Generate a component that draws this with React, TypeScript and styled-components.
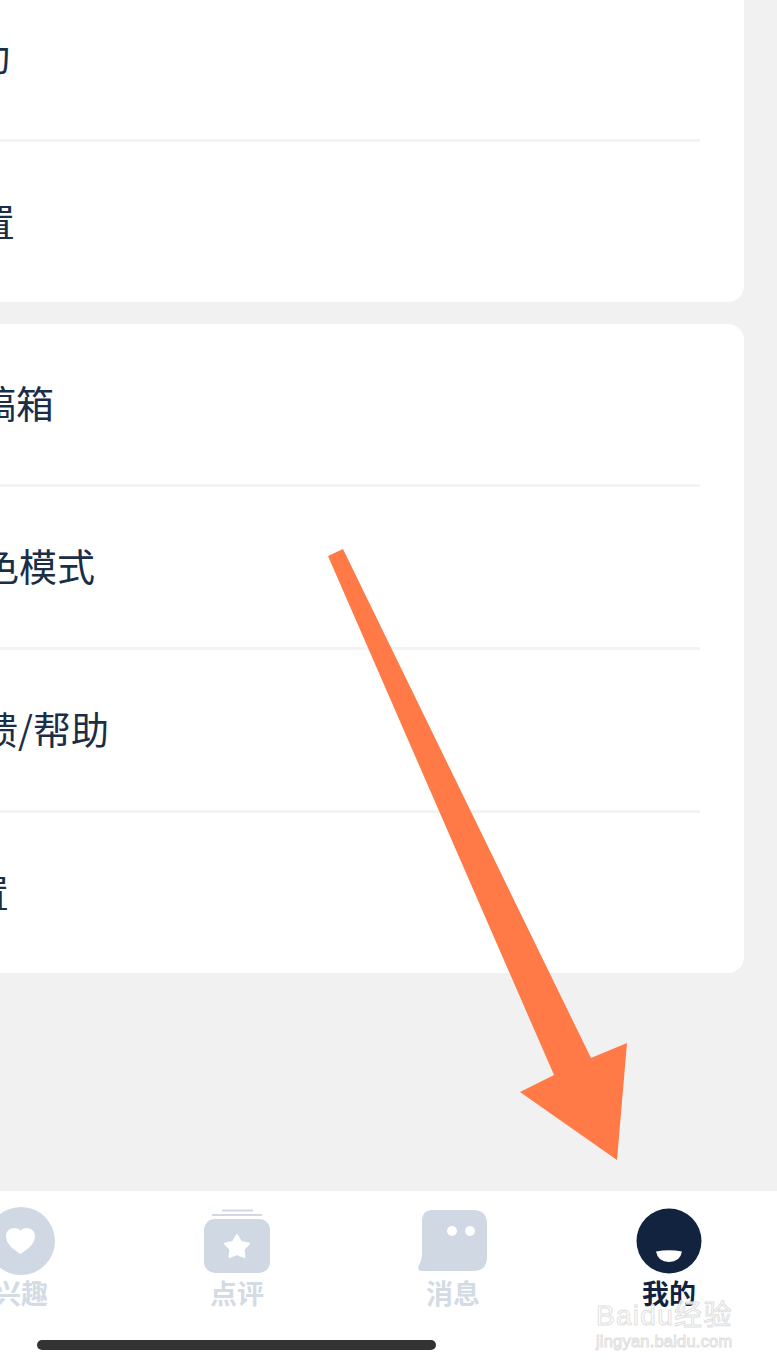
import React from "react";
import styled, { createGlobalStyle } from "styled-components";

const GlobalStyle = createGlobalStyle`
  html, body {
    margin: 0;
    padding: 0;
    width: 777px;
    height: 1367px;
    overflow: hidden;
    background: #f1f1f1;
  }
`;

// the capture is a crop of a 1080px wide phone screen
const Screen = styled.div`
  position: relative;
  display: flex;
  flex-direction: column;
  width: 1080px;
  height: 1367px;
  margin-left: -303px;
  background: #f1f1f1;
  font-family: "Noto Sans CJK SC", "Noto Sans", sans-serif;
`;

const Content = styled.main`
  flex: 1;
  display: flex;
  flex-direction: column;
  gap: 22px;
  margin-top: -21px;
  padding: 0 33px;
`;

const Card = styled.section`
  background: #fff;
  border-radius: 16px;
`;

const Row = styled.div<{ $indent: number; $lift?: number }>`
  display: flex;
  align-items: center;
  box-sizing: content-box;
  height: ${(props) => 160 - (props.$lift ?? 6)}px;
  margin-right: 44px;
  padding-left: ${(props) => props.$indent}px;
  padding-bottom: ${(props) => props.$lift ?? 6}px;
  border-bottom: 3px solid #f3f3f3;
  color: #1a2e48;
  font-size: 38px;
  white-space: nowrap;

  &:last-child {
    border-bottom: none;
  }
`;

const TabBar = styled.nav`
  display: flex;
  flex-direction: column;
  align-items: center;
  height: 177px;
  box-sizing: border-box;
  background: #fff;
  border-top: 1px solid #efefef;
`;

const TabRow = styled.div`
  display: flex;
  width: 100%;
  padding-top: 15px;
`;

const Tab = styled.div<{ $active?: boolean }>`
  flex: 1;
  display: flex;
  flex-direction: column;
  align-items: center;
  color: ${(props) => (props.$active ? "#11233f" : "#d3dbe5")};
  font-size: 27px;
  font-weight: 700;
  line-height: 34px;

  svg {
    display: block;
    width: 72px;
    height: 70px;
  }
`;

const HomeBar = styled.div`
  width: 399px;
  height: 10px;
  margin-top: 30px;
  margin-right: 1px;
  border-radius: 5px;
  background: #333;
`;

const Arrow = styled.svg`
  position: absolute;
  left: 303px;
  top: 0;
  width: 777px;
  height: 1367px;
  pointer-events: none;
`;

const Watermark = styled.div`
  position: absolute;
  left: 899px;
  top: 1299px;
  width: 140px;
  color: rgba(255, 255, 255, 0.75);
  -webkit-text-stroke: 1px #dfdfdf;
  font-family: "Liberation Sans", "Noto Sans CJK SC", sans-serif;
  white-space: nowrap;
`;

const WatermarkBrand = styled.div`
  font-size: 28px;
  line-height: 33px;
  letter-spacing: 1.3px;
`;

const WatermarkUrl = styled.div`
  font-size: 16.5px;
  line-height: 19px;
  letter-spacing: 0.2px;
`;

const ICON = "#cfd8e3";

const HeartIcon = () => (
  <svg viewBox="0 0 72 70">
    <circle cx="36" cy="35" r="34" fill={ICON} />
    <path
      d="M35.500 48 C30 44 21 39 21 30 C21 25 25 22 29.500 22 C32.500 22 34.500 23 35.500 25 C36.500 23 38.500 22 41.500 22 C46 22 50 25 50 30 C50 39 41 44 35.500 48 Z"
      fill="#fff"
    />
  </svg>
);

const ReviewIcon = () => (
  <svg viewBox="0 0 72 70">
    <rect x="21" y="3.500" width="31" height="2" fill={ICON} />
    <rect x="11" y="8" width="50" height="2" fill={ICON} />
    <rect x="3" y="13" width="66" height="54" rx="11" fill={ICON} />
    <path
      d="M36 29 L40 36 L48 37.500 L42.500 43.500 L43.500 51 L36 48 L28.500 51 L29.500 43.500 L24 37.500 L32 36 Z"
      fill="#fff"
      stroke="#fff"
      strokeWidth="2"
      strokeLinejoin="round"
    />
  </svg>
);

const MessageIcon = () => (
  <svg viewBox="0 0 72 70">
    <path
      d="M16 4 H56 Q70 4 70 18 V51 Q70 65 56 65 H5 Q0 65 1.500 60 Q5 54 5 47 V15 Q5 4 16 4 Z"
      fill={ICON}
    />
    <circle cx="35" cy="25" r="5" fill="#fff" />
    <circle cx="53" cy="25" r="5" fill="#fff" />
  </svg>
);

const AvatarIcon = () => (
  <svg viewBox="0 0 72 70">
    <circle cx="36" cy="35" r="32.500" fill="#11233f" />
    <path d="M23 45.500 Q36 43 49 45.500 Q47 56 36 56 Q25 56 23 45.500 Z" fill="#fff" />
  </svg>
);

const App: React.FC = () => {
  return (
    <Screen>
      <GlobalStyle />
      <Content>
        <Card>
          <Row $indent={204} $lift={10}>活动</Row>
          <Row $indent={209}>设置</Row>
        </Card>
        <Card>
          <Row $indent={210}>草稿箱</Row>
          <Row $indent={213}>深色模式</Row>
          <Row $indent={136}>意见反馈/帮助</Row>
          <Row $indent={203}>设置</Row>
        </Card>
      </Content>
      <TabBar>
        <TabRow>
          <Tab>首页</Tab>
          <Tab>
            <HeartIcon />
            兴趣
          </Tab>
          <Tab>
            <ReviewIcon />
            点评
          </Tab>
          <Tab>
            <MessageIcon />
            消息
          </Tab>
          <Tab $active>
            <AvatarIcon />
            我的
          </Tab>
        </TabRow>
        <HomeBar />
      </TabBar>
      <Arrow viewBox="0 0 777 1367">
        <polygon
          points="328,556 343,549 591,1058 627,1043 617,1160 520,1092 554,1075"
          fill="#ff7a47"
        />
      </Arrow>
      <Watermark>
        <WatermarkBrand>Baidu经验</WatermarkBrand>
        <WatermarkUrl>jingyan.baidu.com</WatermarkUrl>
      </Watermark>
    </Screen>
  );
};

export default App;
